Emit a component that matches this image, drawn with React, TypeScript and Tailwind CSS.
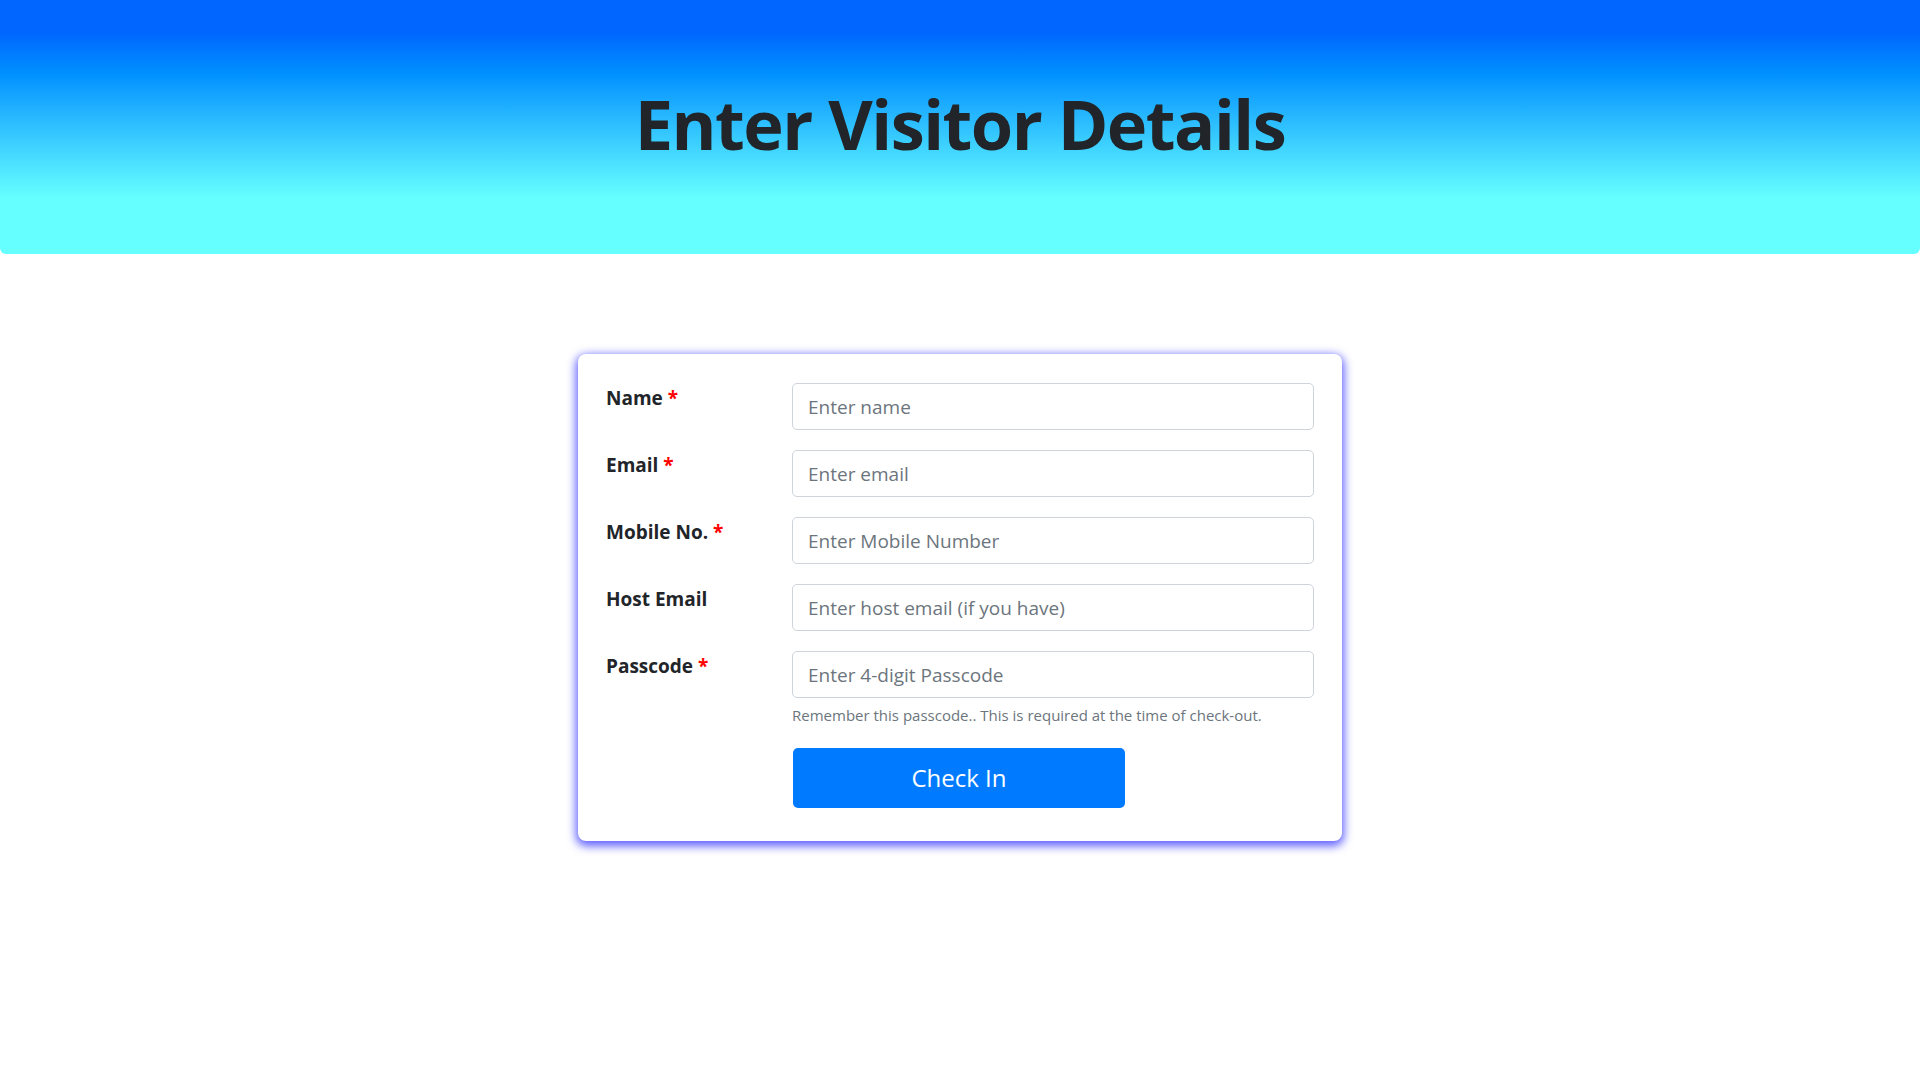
export default function App() {
  const fields = [
    { label: "Name", required: true, placeholder: "Enter name" },
    { label: "Email", required: true, placeholder: "Enter email" },
    { label: "Mobile No.", required: true, placeholder: "Enter Mobile Number" },
    { label: "Host Email", required: false, placeholder: "Enter host email (if you have)" },
  ]

  return (
    <div className="min-h-screen bg-white font-['Open_Sans',sans-serif] text-[#212529]">
      <header className="flex h-[254px] items-start justify-center rounded-b-[6px] bg-gradient-to-b from-[#0066ff] from-[13%] to-[#66ffff] to-[78%]">
        <h1 className="mt-[90px] text-[68.5px] font-bold leading-none tracking-[-1.5px] text-[#212529]">
          Enter Visitor Details
        </h1>
      </header>

      <div className="flex justify-center pt-[100px]">
        <form className="w-[764px] rounded-[8px] bg-white px-[28px] pt-[29px] pb-[33px] shadow-[0_3px_10px_2px_rgba(95,95,255,1)]">
          {fields.map((f) => (
            <div key={f.label} className="mb-[20px] grid grid-cols-[186px_522px]">
              <label className="pt-px text-[19px] font-bold leading-[28px]">
                {f.label} {f.required && <span className="text-[#ff0000]">*</span>}
              </label>
              <input
                placeholder={f.placeholder}
                className="h-[47px] w-full rounded-[5px] border border-[#ced4da] px-[15px] text-[19px] text-[#495057] placeholder:text-[#6c757d]"
              />
            </div>
          ))}

          <div className="grid grid-cols-[186px_522px]">
            <label className="pt-px text-[19px] font-bold leading-[28px]">
              Passcode <span className="text-[#ff0000]">*</span>
            </label>
            <div>
              <input
                placeholder="Enter 4-digit Passcode"
                className="h-[47px] w-full rounded-[5px] border border-[#ced4da] px-[15px] text-[19px] text-[#495057] placeholder:text-[#6c757d]"
              />
              <p className="mt-[6px] text-[15px] leading-[22px] text-[#6c757d]">
                Remember this passcode.. This is required at the time of check-out.
              </p>
            </div>
          </div>

          <div className="grid grid-cols-[186px_522px] pt-[22px]">
            <div />
            <button
              type="button"
              className="ml-[1px] h-[60px] w-[332px] rounded-[5px] bg-[#007bff] text-[24px] text-white"
            >
              Check In
            </button>
          </div>
        </form>
      </div>
    </div>
  )
}
